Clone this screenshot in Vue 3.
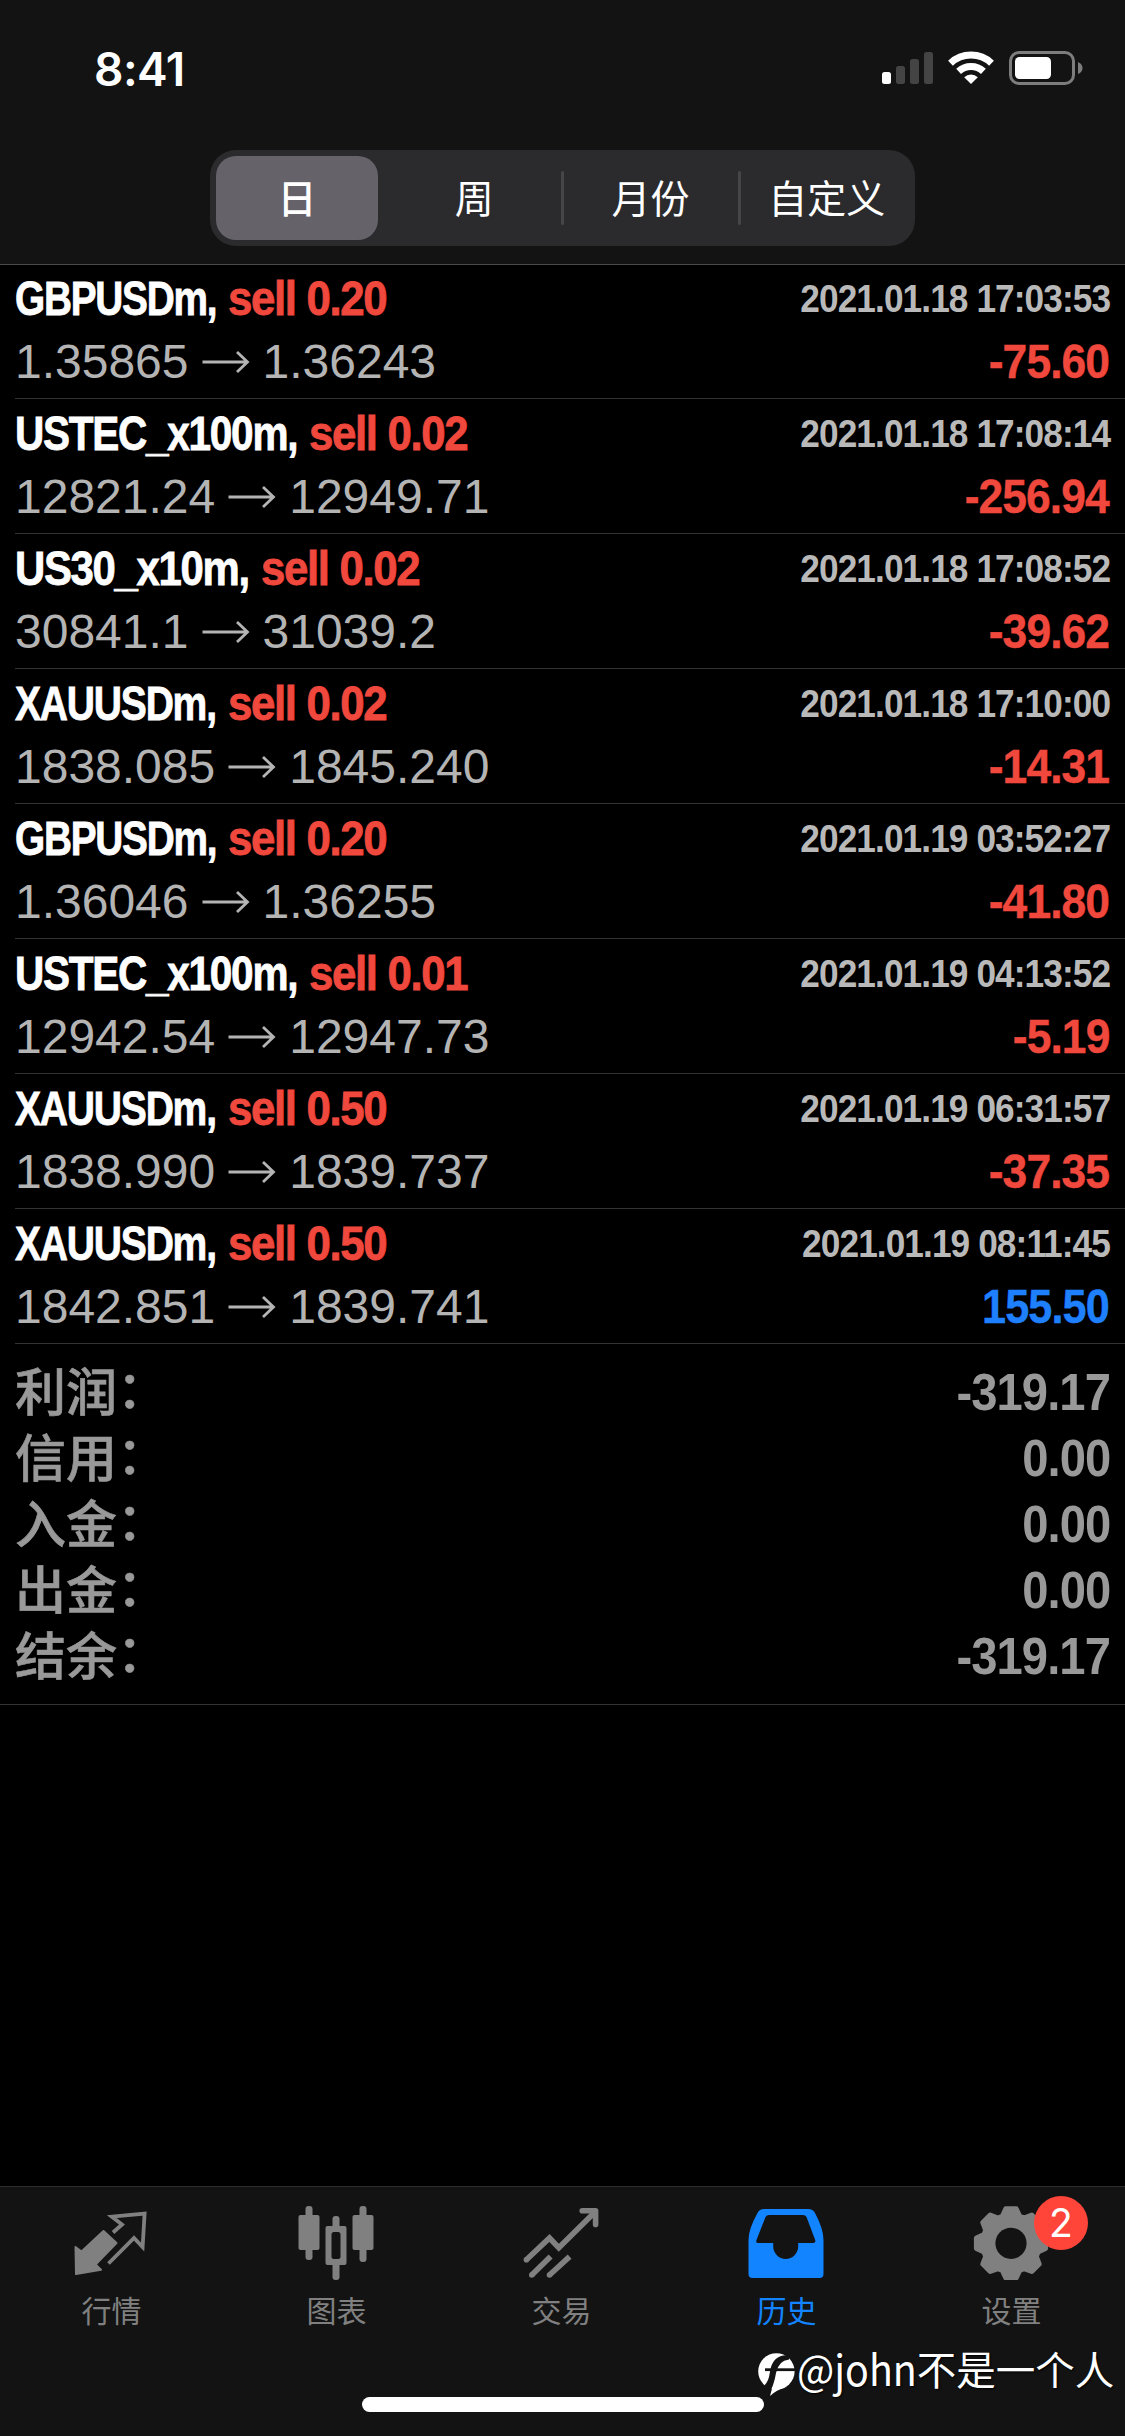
<template>
  <div class="screen">
    <header class="top">
      <div class="status">
        <div class="time">8:41</div>
        <svg class="status-icons" width="204" height="40" viewBox="0 0 204 40">
          <rect x="3" y="24" width="9" height="12" rx="2.5" fill="#fff" />
          <rect x="17" y="18" width="9" height="18" rx="2.5" fill="#444" />
          <rect x="31" y="11" width="9" height="25" rx="2.5" fill="#444" />
          <rect x="45" y="4" width="9" height="32" rx="2.5" fill="#444" />
          <g fill="none" stroke="#fff" stroke-width="7">
            <path d="M71.5 15.2 A30 30 0 0 1 112.5 15.2" />
            <path d="M79.6 23.4 A18 18 0 0 1 104.4 23.4" />
          </g>
          <path d="M92 36 L85.2 29.2 A10 10 0 0 1 98.8 29.2 Z" fill="#fff" />
          <rect x="131.5" y="4.5" width="63" height="31" rx="8.5" fill="none" stroke="#7d7d7d" stroke-width="3" />
          <rect x="136" y="9" width="36" height="22" rx="4.5" fill="#fff" />
          <path d="M199 14 q4.5 2 4.5 6 q0 4 -4.5 6 z" fill="#7d7d7d" />
        </svg>
      </div>
      <div class="segmented">
        <button v-for="(p, idx) in periods" :key="p" :class="{ active: idx === period, divided: idx > 1 }" @click="period = idx">{{ p }}</button>
      </div>
    </header>

    <ul class="deals">
      <li v-for="deal in deals" :key="deal.time" class="deal">
        <div class="deal-line">
          <div class="deal-title">
            <span v-fit="deal.width" class="symbol">{{ deal.symbol }},</span>
            <span v-fit="158" class="side">sell {{ deal.lots }}</span>
          </div>
          <div class="deal-time">{{ deal.time }}</div>
        </div>
        <div class="deal-line">
          <div class="deal-price">
            <span>{{ deal.open }}</span>
            <svg class="arrow" width="48" height="24" viewBox="0 0 48 24">
              <path d="M0.5 12 H45 M35 2 L45.5 12 L35 22" fill="none" stroke="currentColor" stroke-width="2.8" />
            </svg>
            <span>{{ deal.close }}</span>
          </div>
          <div class="deal-profit" :class="{ plus: !deal.profit.startsWith('-') }">{{ deal.profit }}</div>
        </div>
      </li>
    </ul>

    <section class="summary">
      <div v-for="row in summary" :key="row.label" class="summary-row">
        <span class="summary-label">{{ row.label }}<span class="colon">：</span></span>
        <span class="summary-value">{{ row.value }}</span>
      </div>
    </section>

    <nav class="tabs">
      <div v-for="(tab, idx) in tabs" :key="tab" class="tab" :class="{ active: idx === 3 }">
        <svg v-if="idx === 0" width="80" height="80" viewBox="0 0 80 80">
          <path d="M3.5 47 L9.5 51.5 L31.5 31 L44.5 43 L23.6 64.6 L29 69.7 L4 74 Z" fill="currentColor" stroke="currentColor" stroke-width="2" stroke-linejoin="round" />
          <path d="M41 32.5 L50 24.5 L39.8 16.6 L72.6 13.5 L70.6 47 L62 38 L36.5 63.5" fill="none" stroke="currentColor" stroke-width="3.8" />
        </svg>
        <svg v-else-if="idx === 1" width="80" height="80" viewBox="0 0 80 80" fill="currentColor">
          <rect x="8.5" y="6" width="7" height="54" rx="3" />
          <rect x="1.5" y="15" width="21" height="35" rx="2" />
          <rect x="35.5" y="16" width="7" height="64" rx="3" />
          <rect x="28.5" y="26" width="21" height="39" rx="2" />
          <rect x="34.5" y="32" width="9" height="27" rx="2.5" fill="#131313" />
          <rect x="62.5" y="6" width="7" height="56" rx="3" />
          <rect x="55.5" y="15" width="21" height="35" rx="2" />
        </svg>
        <svg v-else-if="idx === 2" width="80" height="80" viewBox="0 0 80 80" fill="none" stroke="currentColor" stroke-width="5.6">
          <path d="M4.4 59.8 L27.5 38 L36.8 47.8 L73 12" />
          <path d="M60.2 10.8 H73.6 V24.4" stroke-linecap="round" stroke-linejoin="round" />
          <path d="M9.8 75 L28.6 56.4 M27.5 75 L47.6 56.6" />
          <g fill="currentColor" stroke="none">
            <circle cx="4.4" cy="59.8" r="2.8" />
            <circle cx="9.8" cy="75" r="2.8" />
            <circle cx="27.5" cy="75" r="2.8" />
          </g>
        </svg>
        <svg v-else-if="idx === 3" width="80" height="80" viewBox="0 0 80 80" fill="currentColor" fill-rule="evenodd">
          <path d="M17.5 9 H61 Q66 9 68 13 Q76.5 29 76.5 40 V74 Q76.5 78 72.5 78 H5.5 Q1.5 78 1.5 74 V40 Q1.5 29 10.5 13 Q12.5 9 17.5 9 Z M22 15 Q19.5 15 18.5 17 L9.5 40 Q8.5 43 11 43 H26.2 V46 A12.5 13 0 0 0 51.2 46 V43 H66.5 Q69 43 68.2 40 L59.5 17 Q58.5 15 56 15 Z" />
        </svg>
        <svg v-else width="80" height="80" viewBox="0 0 80 80">
          <path :d="gear" fill="currentColor" stroke="currentColor" stroke-width="5" stroke-linejoin="round" />
          <circle cx="39" cy="43.3" r="15.6" fill="#131313" />
        </svg>
        <span class="tab-label">{{ tab }}</span>
        <span v-if="idx === 4" class="badge">2</span>
      </div>
    </nav>

    <div class="home-indicator"></div>
    <div class="signature">
      <svg width="40" height="46" viewBox="0 0 40 46">
        <circle cx="19.4" cy="20.4" r="18.2" fill="#fff" />
        <path d="M13 45 L17 30 L28 36.4 Q19 39 13 45 Z" fill="#fff" />
        <path d="M32 4.5 C22 3 15.5 9 13.5 18 L12 26 Q10.5 32 5 37 L11 44.5 Q17 35 19 22 Q21.5 9.5 32 8.5 Z" fill="#131313" />
        <path d="M8 18.7 H38" stroke="#131313" stroke-width="2.8" />
      </svg>
      <span v-fit="120" class="handle">@john</span>
      <span>不是一个人</span>
    </div>
  </div>
</template>

<script setup>
import { ref } from 'vue'

const periods = ['日', '周', '月份', '自定义']
const period = ref(0)

const deals = [
  { symbol: 'GBPUSDm', width: 201, lots: '0.20', time: '2021.01.18 17:03:53', open: '1.35865', close: '1.36243', profit: '-75.60' },
  { symbol: 'USTEC_x100m', width: 282, lots: '0.02', time: '2021.01.18 17:08:14', open: '12821.24', close: '12949.71', profit: '-256.94' },
  { symbol: 'US30_x10m', width: 234, lots: '0.02', time: '2021.01.18 17:08:52', open: '30841.1', close: '31039.2', profit: '-39.62' },
  { symbol: 'XAUUSDm', width: 201, lots: '0.02', time: '2021.01.18 17:10:00', open: '1838.085', close: '1845.240', profit: '-14.31' },
  { symbol: 'GBPUSDm', width: 201, lots: '0.20', time: '2021.01.19 03:52:27', open: '1.36046', close: '1.36255', profit: '-41.80' },
  { symbol: 'USTEC_x100m', width: 282, lots: '0.01', time: '2021.01.19 04:13:52', open: '12942.54', close: '12947.73', profit: '-5.19' },
  { symbol: 'XAUUSDm', width: 201, lots: '0.50', time: '2021.01.19 06:31:57', open: '1838.990', close: '1839.737', profit: '-37.35' },
  { symbol: 'XAUUSDm', width: 201, lots: '0.50', time: '2021.01.19 08:11:45', open: '1842.851', close: '1839.741', profit: '155.50' }
]

const summary = [
  { label: '利润', value: '-319.17' },
  { label: '信用', value: '0.00' },
  { label: '入金', value: '0.00' },
  { label: '出金', value: '0.00' },
  { label: '结余', value: '-319.17' }
]

const tabs = ['行情', '图表', '交易', '历史', '设置']

// condense text to a given width, the layout box follows
const vFit = {
  mounted(el, { value }) {
    const w = el.offsetWidth
    el.style.transform = `scaleX(${value / w})`
    el.style.marginRight = `${value - w}px`
  }
}

// eight-tooth gear
const gear = (() => {
  const pts = []
  for (let i = 0; i < 8; i++) {
    const a = (i * Math.PI) / 4
    for (const [r, d] of [[28.5, -0.31], [35, -0.15], [35, 0.15], [28.5, 0.31]]) {
      pts.push(`${(39 + r * Math.sin(a + d)).toFixed(1)} ${(43.3 - r * Math.cos(a + d)).toFixed(1)}`)
    }
  }
  return `M${pts.join(' L')} Z`
})()
</script>

<style>
body {
  margin: 0;
  background: #000;
}
</style>

<style scoped>
.screen {
  position: relative;
  display: flex;
  flex-direction: column;
  width: 1125px;
  height: 2436px;
  background: #000;
  color: #fff;
  overflow: hidden;
  font-family: "Liberation Sans", "Noto Sans CJK SC", sans-serif;
}
.top {
  box-sizing: border-box;
  height: 265px;
  background: #131313;
  border-bottom: 1px solid #4a4a4a;
}
.status {
  display: flex;
  justify-content: space-between;
  height: 102px;
  padding: 48px 42px 0 94px;
}
.time {
  font: 600 46px/42px Inter, sans-serif;
  letter-spacing: -0.5px;
}
.segmented {
  display: flex;
  box-sizing: border-box;
  width: 705px;
  height: 96px;
  margin: 0 auto;
  padding: 6px 0 6px 6px;
  background: #2b2b2d;
  border-radius: 26px;
}
.segmented button {
  position: relative;
  flex: 1;
  padding: 0 0 4px;
  border: none;
  border-radius: 20px;
  background: none;
  color: #fff;
  font: 400 39px/80px "Noto Sans CJK SC", sans-serif;
}
.segmented button.active {
  flex: 0 0 162px;
  margin-right: 8px;
  background: #656369;
  font-weight: 500;
}
.segmented button.divided::before {
  content: "";
  position: absolute;
  left: -1px;
  top: 15px;
  width: 3px;
  height: 54px;
  border-radius: 2px;
  background: #464648;
}
.deals {
  margin: 0;
  padding: 0;
  list-style: none;
}
.deal {
  box-sizing: border-box;
  height: 135px;
  margin-left: 15px;
  padding: 2px 15px 0 0;
  border-bottom: 1px solid #333;
}
.deal:first-child {
  height: 134px;
  padding-top: 1px;
}
.deal-line {
  display: flex;
  justify-content: space-between;
  height: 63px;
  line-height: 66px;
  white-space: nowrap;
}
.deal-title {
  display: flex;
  font-size: 48px;
  font-weight: bold;
  letter-spacing: -1.5px;
  -webkit-text-stroke: 0.8px currentColor;
}
.symbol,
.side,
.handle {
  transform-origin: left;
}
.side {
  position: relative;
  left: 12px;
  color: #f0483d;
}
.deal-time {
  color: #b9b9b9;
  font-size: 39px;
  font-weight: bold;
  letter-spacing: -1px;
  transform: scaleX(0.903);
  transform-origin: right;
}
.deal-price {
  display: flex;
  align-items: center;
  height: 66px;
  color: #b4b4b4;
  font-size: 48px;
}
.arrow {
  margin: 0 13px;
}
.deal-profit {
  margin-right: 1px;
  color: #f0483d;
  font-size: 48px;
  font-weight: bold;
  letter-spacing: -1px;
  transform: scaleX(0.925);
  transform-origin: right;
  -webkit-text-stroke: 0.4px currentColor;
}
.deal-profit.plus {
  color: #1f80ff;
  transform: scaleX(0.9);
}
.summary {
  padding: 15px;
  border-bottom: 1px solid #333;
  color: #999;
}
.summary-row {
  display: flex;
  justify-content: space-between;
  height: 66px;
}
.summary-label {
  margin-top: -3px;
  font: 500 51px/66px "Noto Sans CJK SC", sans-serif;
  -webkit-text-stroke: 0.6px currentColor;
}
.colon {
  position: relative;
  top: -3px;
}
.summary-value {
  font: bold 51px/67px "Liberation Sans", sans-serif;
  letter-spacing: -1px;
  transform: scaleX(0.925);
  transform-origin: right;
}
.tabs {
  display: flex;
  box-sizing: border-box;
  height: 250px;
  margin-top: auto;
  background: #131313;
  border-top: 1px solid #2e2e2e;
}
.tab {
  position: relative;
  display: flex;
  flex: 1;
  flex-direction: column;
  align-items: center;
  padding: 13px 1px 0 0;
  color: #808080;
}
.tab.active {
  color: #1284ff;
}
.tab-label {
  margin: 9px 1px 0 0;
  font: 400 30px/40px "Noto Sans CJK SC", sans-serif;
}
.badge {
  position: absolute;
  left: 134px;
  top: 9px;
  width: 54px;
  height: 54px;
  border-radius: 50%;
  background: #ff453a;
  color: #fff;
  font: 400 39px/53px Inter, sans-serif;
  text-align: center;
}
.home-indicator {
  position: absolute;
  left: 362px;
  top: 2397px;
  width: 402px;
  height: 15px;
  border-radius: 8px;
  background: #fff;
}
.signature {
  position: absolute;
  left: 757px;
  top: 2351px;
  display: flex;
  align-items: flex-start;
  font: 400 39.5px/33px "Noto Sans CJK SC", sans-serif;
  text-shadow: 1px 1px 2px #000;
  white-space: nowrap;
}
.handle {
  font-size: 42px;
}
</style>
